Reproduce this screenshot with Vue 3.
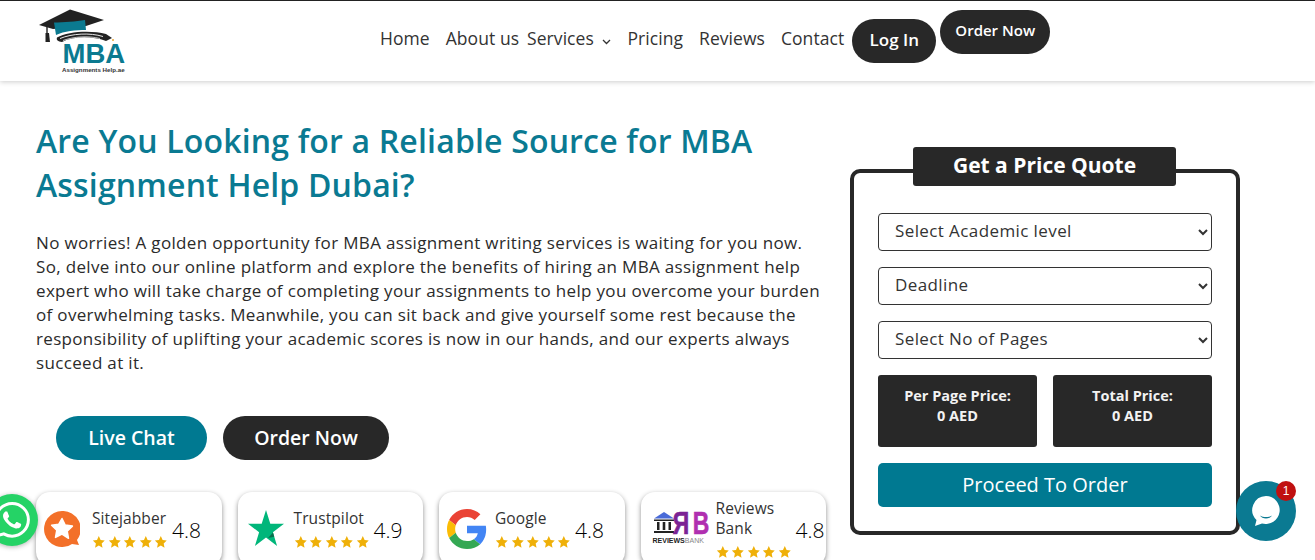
<script setup>
const navLinks = ['Home', 'About us', 'Services', 'Pricing', 'Reviews', 'Contact']

const reviews = [
  { name: 'Sitejabber', score: '4.8', logo: 'sitejabber' },
  { name: 'Trustpilot', score: '4.9', logo: 'trustpilot' },
  { name: 'Google', score: '4.8', logo: 'google' },
  { name: 'Reviews Bank', score: '4.8', logo: 'bank' },
]

const selects = ['Select Academic level', 'Deadline', 'Select No of Pages']
const prices = ['Per Page Price:', 'Total Price:']
</script>

<template>
  <header class="site-header">
    <a class="logo" href="#">
      <svg width="90" height="66" viewBox="38 9 90 66">
        <path d="M39 25 70 9.500 104 20 86 26 53 29z" fill="#222" />
        <path d="M54 22.500C64 22.500 76 21.500 85 20L86 30C76 30 64 31 56 35z" fill="#0b7a90" />
        <path d="M47 26V34" stroke="#222" stroke-width="1.400" />
        <path d="M45.500 33H49L50 42H45.500z" fill="#222" />
        <path d="M57 37.500C68 31 92 30 106 34L112 38 106 41C92 36 74 36 62 42 58 41.500 56 40 57 37.500z" fill="#222" />
        <path d="M60 38.500C72 33.500 90 32.500 103 36.500" stroke="#fff" stroke-width="0.900" fill="none" />
        <path d="M63 40.500C74 36.500 88 35.500 100 38.500" stroke="#fff" stroke-width="0.700" fill="none" />
        <circle cx="113" cy="40" r="0.900" fill="#e89a1c" />
        <text x="62.500" y="63" class="logo-mba">MBA</text>
        <text x="62" y="71.500" class="logo-sub">Assignments Help.ae</text>
      </svg>
    </a>

    <nav class="main-nav">
      <a
        v-for="link in navLinks"
        :key="link"
        class="nav-link"
        :class="{ 'nav-link--tight': link === 'About us' }"
        href="#"
      >
        {{ link }}
        <svg v-if="link === 'Services'" class="caret" width="9" height="6" viewBox="0 0 9 6">
          <path d="M1 1l3.500 3.500L8 1" fill="none" stroke="#333" stroke-width="1.300" />
        </svg>
      </a>
      <a class="pill pill--login" href="#">Log In</a>
      <a class="pill pill--order" href="#">Order Now</a>
    </nav>
  </header>

  <main class="hero">
    <section class="hero-left">
      <h1 class="hero-title">
        Are You Looking for a Reliable Source for MBA<br />
        Assignment Help Dubai?
      </h1>
      <p class="hero-text">
        No worries! A golden opportunity for MBA assignment writing services is waiting for you now.<br />
        So, delve into our online platform and explore the benefits of hiring an MBA assignment help<br />
        expert who will take charge of completing your assignments to help you overcome your burden<br />
        of overwhelming tasks. Meanwhile, you can sit back and give yourself some rest because the<br />
        responsibility of uplifting your academic scores is now in our hands, and our experts always<br />
        succeed at it.
      </p>

      <div class="hero-actions">
        <a class="cta cta--teal" href="#">Live Chat</a>
        <a class="cta cta--dark" href="#">Order Now</a>
      </div>

      <div class="review-row">
        <div v-for="item in reviews" :key="item.name" class="review-card">
          <div class="review-logo" :class="`review-logo--${item.logo}`">
            <svg v-if="item.logo === 'sitejabber'" width="36" height="36" viewBox="0 0 36 36">
              <path d="M18 0a18 18 0 1 0 10 33l7 1-2-5A18 18 0 0 0 18 0z" fill="#f37029" />
              <path
                d="M18 7.500l3.200 6.600 7.200 1-5.200 5 1.300 7.200L18 23l-6.500 3.400 1.300-7.200-5.200-5 7.200-1z"
                fill="#fff"
                stroke="#fff"
                stroke-width="1.500"
                stroke-linejoin="round"
              />
            </svg>
            <svg v-else-if="item.logo === 'trustpilot'" width="36" height="38" viewBox="0 0 36 38">
              <path d="M18 0l4.300 13.700H36L24.900 22.300 29.100 36 18 27.500 6.900 36 11.100 22.300 0 13.700h13.700z" fill="#00b67a" />
              <path d="M25 22.500l1.200 4.200-6.200 1.300z" fill="#0a6e4c" />
            </svg>
            <svg v-else-if="item.logo === 'google'" width="40" height="40" viewBox="0 0 48 48">
              <path fill="#EA4335" d="M24 9.500c3.540 0 6.710 1.220 9.210 3.600l6.850-6.850C35.900 2.380 30.470 0 24 0 14.620 0 6.510 5.380 2.560 13.220l7.980 6.190C12.430 13.720 17.740 9.500 24 9.500z" />
              <path fill="#4285F4" d="M46.980 24.550c0-1.570-.15-3.090-.38-4.550H24v9.020h12.940c-.58 2.960-2.260 5.480-4.780 7.180l7.730 6c4.510-4.180 7.090-10.360 7.090-17.650z" />
              <path fill="#FBBC05" d="M10.530 28.590c-.48-1.450-.76-2.990-.76-4.590s.27-3.140.76-4.590l-7.980-6.190C.92 16.460 0 20.120 0 24c0 3.880.92 7.540 2.560 10.780l7.970-6.190z" />
              <path fill="#34A853" d="M24 48c6.480 0 11.930-2.130 15.890-5.810l-7.730-6c-2.150 1.450-4.920 2.300-8.160 2.300-6.260 0-11.570-4.220-13.470-9.910l-7.980 6.190C6.510 42.620 14.620 48 24 48z" />
            </svg>
            <div v-else class="bank-logo">
              <div class="bank-top">
                <svg width="22" height="23" viewBox="0 0 22 23">
                  <path d="M11 0l10 6.500H1z" fill="#4a6bd8" />
                  <rect x="1" y="7.500" width="20" height="1.500" fill="#222" />
                  <path d="M4 10h2.500v8H4zM9.700 10h2.600v8H9.700zM15.500 10H18v8h-2.500z" fill="#222" />
                  <rect x="1" y="19" width="20" height="2" fill="#222" />
                </svg>
                <span class="bank-mark"><span class="bank-r">R</span><span class="bank-b">B</span></span>
              </div>
              <span class="bank-word"><b>REVIEWS</b>BANK</span>
            </div>
          </div>
          <div class="review-info">
            <span class="review-name">{{ item.name }}</span>
            <div class="stars">
              <svg v-for="n in 5" :key="n" width="14" height="14" viewBox="0 0 24 24">
                <path d="M12 1.500l3.200 7 7.300.9-5.400 5.100 1.500 7.500-6.600-3.800-6.600 3.800 1.500-7.500L1.500 9.400l7.300-.9z" fill="#efb008" />
              </svg>
            </div>
          </div>
          <span class="review-score">{{ item.score }}</span>
        </div>
      </div>
    </section>

    <aside class="quote-card">
      <h2 class="quote-title">Get a Price Quote</h2>
      <select v-for="label in selects" :key="label" class="quote-select">
        <option>{{ label }}</option>
      </select>
      <div class="price-row">
        <div v-for="label in prices" :key="label" class="price-box">
          {{ label }}<br />0 AED
        </div>
      </div>
      <button class="proceed-btn">Proceed To Order</button>
    </aside>
  </main>

  <!-- 悬浮按钮 -->
  <a class="whatsapp" href="#">
    <svg width="36" height="36" viewBox="0 0 24 24">
      <path fill="#fff" d="M17.472 14.382c-.297-.149-1.758-.867-2.030-.967-.273-.099-.471-.148-.670.150-.197.297-.767.966-.940 1.164-.173.199-.347.223-.644.075-.297-.150-1.255-.463-2.390-1.475-.883-.788-1.480-1.761-1.653-2.059-.173-.297-.018-.458.130-.606.134-.133.298-.347.446-.520.149-.174.198-.298.298-.497.099-.198.050-.371-.025-.520-.075-.149-.669-1.612-.916-2.207-.242-.579-.487-.500-.669-.510-.173-.008-.371-.010-.570-.010-.198 0-.520.074-.792.372-.272.297-1.040 1.016-1.040 2.479 0 1.462 1.065 2.875 1.213 3.074.149.198 2.096 3.200 5.077 4.487.709.306 1.262.489 1.694.625.712.227 1.360.195 1.871.118.571-.085 1.758-.719 2.006-1.413.248-.694.248-1.289.173-1.413-.074-.124-.272-.198-.570-.347m-5.421 7.403h-.004a9.870 9.870 0 01-5.031-1.378l-.361-.214-3.741.982.998-3.648-.235-.374a9.860 9.860 0 01-1.510-5.260c.001-5.450 4.436-9.884 9.888-9.884 2.640 0 5.122 1.030 6.988 2.898a9.825 9.825 0 012.893 6.994c-.003 5.450-4.437 9.884-9.885 9.884m8.413-18.297A11.815 11.815 0 0012.050 0C5.495 0 .160 5.335.157 11.892c0 2.096.547 4.142 1.588 5.945L.057 24l6.305-1.654a11.882 11.882 0 005.683 1.448h.005c6.554 0 11.890-5.335 11.893-11.893a11.821 11.821 0 00-3.480-8.413z" />
    </svg>
  </a>
  <a class="chat-bubble" href="#">
    <svg width="30" height="32" viewBox="0 0 30 32">
      <path d="M15 1a14 14 0 1 1-4 27.500L4 31l1.500-6A14 14 0 0 1 15 1z" fill="#fff" />
      <path d="M9 20.500c3.500 2 8.500 2 12 0-2 4-10 4-12 0z" fill="#0b7a92" />
    </svg>
    <span class="chat-badge">1</span>
  </a>
</template>

<style>
html,
body {
  height: 560px;
  overflow: hidden;
  background: #fff;
}
</style>

<style scoped>
/* ========================================
   顶部导航
======================================== */
.site-header {
  height: 81px;
  box-sizing: border-box;
  border-top: 1px solid #222;
  box-shadow: 0 1px 5px rgba(0, 0, 0, 0.2);
  display: flex;
  padding-left: 38px;
  font-family: "Open Sans", "Liberation Sans", sans-serif;
  color: #333;
  background: #fff;
}

.logo {
  display: block;
  width: 342px;
  padding-top: 8px;
}

.logo-mba {
  font-family: "Liberation Sans", sans-serif;
  font-weight: 700;
  font-size: 27.500px;
  fill: #0b7a90;
}

.logo-sub {
  font-family: "Liberation Sans", sans-serif;
  font-weight: 700;
  font-size: 6.200px;
  fill: #333;
}

.main-nav {
  display: flex;
  align-items: flex-start;
  gap: 16px;
}

.nav-link {
  margin-top: 26px;
  font-size: 17.500px;
  line-height: 22px;
  letter-spacing: 0.06px;
  color: #333;
  text-decoration: none;
  white-space: nowrap;
}

.nav-link--tight {
  margin-right: -8px;
}

.caret {
  margin-left: 4px;
}

.pill {
  height: 44px;
  line-height: 41px;
  border-radius: 22px;
  background: #282828;
  color: #fff;
  font-weight: 600;
  text-align: center;
  text-decoration: none;
  font-size: 16px;
}

.pill--login {
  width: 84px;
  margin: 18px 0 0 -8px;
  font-size: 17px;
}

.pill--order {
  width: 110px;
  margin: 9px 0 0 -12px;
  font-size: 15px;
}

/* ========================================
   主体
======================================== */
.hero {
  display: flex;
  gap: 24px;
  padding: 38px 0 0 36px;
  font-family: "Open Sans", "Liberation Sans", sans-serif;
}

.hero-left {
  width: 790px;
  flex: none;
}

.hero-title {
  margin: 0 0 24px;
  font-size: 32px;
  line-height: 44px;
  font-weight: 600;
  letter-spacing: 0.17px;
  color: #0a7a92;
  white-space: nowrap;
}

.hero-text {
  margin: 0 0 41px;
  font-size: 17px;
  line-height: 24px;
  letter-spacing: 0.33px;
  color: #2b2b2b;
  white-space: nowrap;
}

.hero-actions {
  display: flex;
  gap: 16px;
  padding-left: 20px;
  margin-bottom: 32px;
}

.cta {
  height: 44px;
  line-height: 44px;
  border-radius: 22px;
  color: #fff;
  font-size: 19.500px;
  font-weight: 600;
  text-align: center;
  text-decoration: none;
}

.cta--teal {
  width: 151px;
  background: #007991;
}

.cta--dark {
  width: 166px;
  background: #282828;
}

.review-row {
  display: grid;
  grid-template-columns: repeat(4, 1fr);
  gap: 16px;
}

.review-card {
  height: 74px;
  box-sizing: border-box;
  padding-left: 8px;
  display: flex;
  align-items: center;
  border-radius: 14px;
  background: #fff;
  box-shadow: 0 2px 5px rgba(0, 0, 0, 0.45);
}

.review-logo {
  flex: none;
  width: 40px;
  margin-right: 8px;
  display: flex;
}

.review-logo--trustpilot {
  padding-left: 2px;
  width: 38px;
}

.review-logo--bank {
  width: 56px;
  padding-left: 4px;
  margin-right: 7px;
}

.bank-logo {
  display: flex;
  flex-direction: column;
  width: 52px;
}

.bank-top {
  display: flex;
  align-items: flex-end;
  gap: 2px;
}

.bank-mark {
  display: flex;
  font-family: "Liberation Sans", sans-serif;
  font-weight: 700;
  font-size: 31px;
  line-height: 23px;
  color: #b02fb0;
  -webkit-text-stroke: 0.6px currentColor;
}

.bank-r,
.bank-b {
  display: block;
  width: 14px;
  text-align: center;
  white-space: nowrap;
}

.bank-r {
  transform: scaleX(-0.74);
  color: #7b2394;
}

.bank-b {
  transform: scaleX(0.74);
}

.bank-word {
  font-family: "Liberation Sans", sans-serif;
  font-size: 7px;
  line-height: 11px;
  color: #888;
  white-space: nowrap;
}

.bank-word b {
  color: #222;
}

.review-info {
  flex: none;
  width: 76px;
  margin-right: 4px;
}

.review-name {
  display: block;
  margin-top: -2px;
  font-size: 15.500px;
  line-height: 20px;
  letter-spacing: 0.1px;
  color: #333;
}

.stars {
  display: flex;
  gap: 2px;
  margin-top: 7px;
}

.review-score {
  padding-top: 2px;
  font-family: "Open Sans", sans-serif;
  font-weight: 300;
  font-size: 21px;
  color: #000;
}

/* ========================================
   询价卡片
======================================== */
.quote-card {
  position: relative;
  width: 390px;
  height: 366px;
  box-sizing: border-box;
  margin-top: 50px;
  padding: 40px 24px 24px;
  border: 4px solid #282828;
  border-radius: 10px;
  display: flex;
  flex-direction: column;
  gap: 16px;
}

.quote-title {
  position: absolute;
  top: -26px;
  left: 59px;
  width: 263px;
  height: 39px;
  margin: 0;
  border-radius: 3px;
  background: #282828;
  color: #fff;
  font-size: 21px;
  font-weight: 700;
  line-height: 37px;
  text-align: center;
}

.quote-select {
  width: 100%;
  height: 38px;
  flex: none;
  padding: 0 12px 4px;
  border: 1px solid #333;
  border-radius: 4px;
  background: #fff;
  color: #333;
  font-family: "Open Sans", sans-serif;
  font-size: 17px;
  letter-spacing: 0.4px;
}

.price-row {
  display: flex;
  gap: 16px;
}

.price-box {
  flex: 1;
  height: 72px;
  box-sizing: border-box;
  padding-top: 11px;
  border-radius: 3px;
  background: #282828;
  color: #f2f2f2;
  font-size: 14.500px;
  font-weight: 700;
  line-height: 20px;
  text-align: center;
}

.proceed-btn {
  height: 44px;
  flex: none;
  padding-bottom: 3px;
  border: none;
  border-radius: 5px;
  background: #007991;
  color: #fff;
  font-family: "Open Sans", sans-serif;
  font-size: 20px;
}

/* ========================================
   悬浮按钮
======================================== */
.whatsapp {
  position: fixed;
  left: -14px;
  top: 494px;
  width: 52px;
  height: 52px;
  border-radius: 50%;
  background: #25d366;
  box-shadow: 0 1px 5px rgba(0, 0, 0, 0.3);
  display: flex;
  align-items: center;
  justify-content: center;
}

.chat-bubble {
  position: fixed;
  left: 1236px;
  top: 481px;
  width: 60px;
  height: 60px;
  border-radius: 50%;
  background: #0b7a92;
  display: flex;
  align-items: center;
  justify-content: center;
}

.chat-badge {
  position: absolute;
  top: 0;
  right: 0;
  width: 20px;
  height: 20px;
  border-radius: 50%;
  background: #c01010;
  color: #fff;
  font-family: "Liberation Sans", sans-serif;
  font-size: 12px;
  line-height: 20px;
  text-align: center;
}
</style>
